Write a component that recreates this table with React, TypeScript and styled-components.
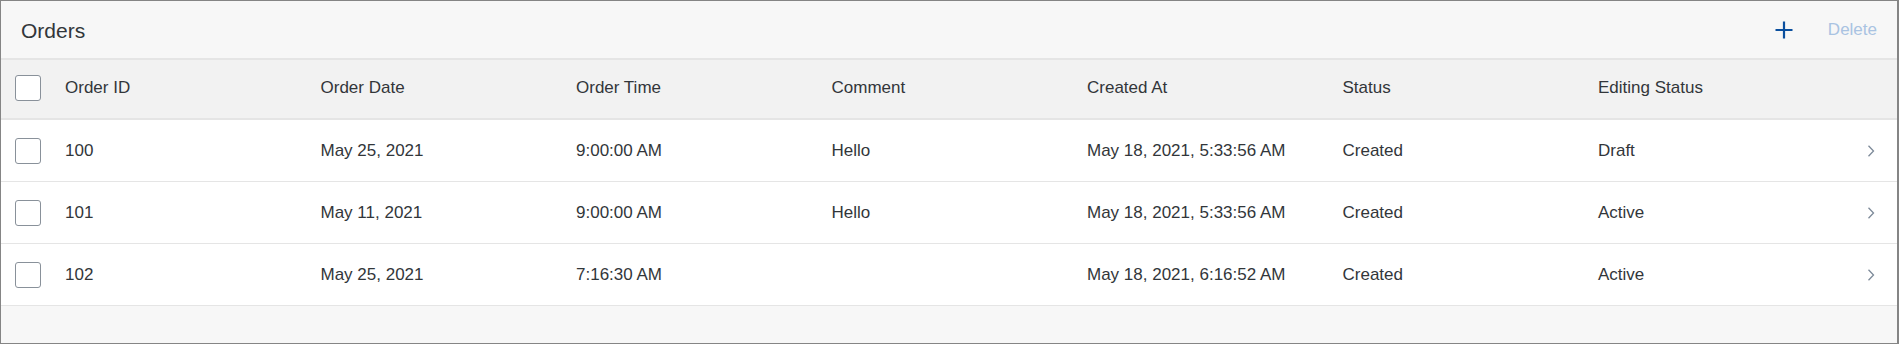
import React from "react";
import styled, { createGlobalStyle } from "styled-components";

const GlobalStyle = createGlobalStyle`
  html, body { margin: 0; padding: 0; background: #ffffff; }
  * { box-sizing: border-box; }
`

const Panel = styled.div`
  width: 1899px;
  height: 344px;
  border: 1px solid #858585;
  border-right-width: 2px;
  background: #f7f7f7;
  font-family: "Liberation Sans", Arial, sans-serif;
  color: #32363a;
  display: flex;
  flex-direction: column;
`

const TitleBar = styled.div`
  height: 59px;
  flex: none;
  display: flex;
  align-items: center;
  justify-content: space-between;
  padding: 3px 20px 0 20px;
  background: #f7f7f7;
  border-bottom: 2px solid #e5e5e5;
`

const Title = styled.h2`
  margin: 0;
  font-size: 21px;
  font-weight: normal;
  color: #32363a;
`

const Actions = styled.div`
  display: flex;
  align-items: center;
  gap: 35px;
  margin-top: -3px;
`

const IconButton = styled.button`
  border: none;
  background: none;
  padding: 0;
  width: 18px;
  height: 18px;
  display: flex;
  align-items: center;
  justify-content: center;
  cursor: pointer;
`

const TextButton = styled.button<{ $disabled?: boolean }>`
  border: none;
  background: none;
  padding: 0;
  font-family: inherit;
  font-size: 17px;
  color: ${p => (p.$disabled ? "#a9c3e2" : "#0854a0")};
  cursor: ${p => (p.$disabled ? "default" : "pointer")};
`

const Row = styled.div<{ $header?: boolean }>`
  display: grid;
  grid-template-columns: 57px repeat(7, 255.5px) 1fr;
  align-items: center;
  flex: none;
  height: ${p => (p.$header ? "60px" : "62px")};
  padding-bottom: ${p => (p.$header ? "2px" : "0")};
  background: ${p => (p.$header ? "#f2f2f2" : "#ffffff")};
  border-bottom: ${p => (p.$header ? "2px" : "1px")} solid #e5e5e5;
  font-size: 17px;
`

const Cell = styled.div`
  padding-left: 7px;
  white-space: nowrap;
  overflow: hidden;
`

const SelectCell = styled.div`
  padding-left: 14px;
  display: flex;
  align-items: center;
`

const Checkbox = styled.span`
  width: 26px;
  height: 26px;
  border: 1px solid #89919a;
  border-radius: 3px;
  background: #ffffff;
  display: block;
`

const NavCell = styled.div`
  display: flex;
  align-items: center;
  justify-content: center;
  padding-right: 2px;
`

const Footer = styled.div`
  flex: 1;
  background: #f7f7f7;
`

const columns = ["Order ID", "Order Date", "Order Time", "Comment", "Created At", "Status", "Editing Status"]

const orders = [
  { id: "100", date: "May 25, 2021", time: "9:00:00 AM", comment: "Hello", created: "May 18, 2021, 5:33:56 AM", status: "Created", editing: "Draft" },
  { id: "101", date: "May 11, 2021", time: "9:00:00 AM", comment: "Hello", created: "May 18, 2021, 5:33:56 AM", status: "Created", editing: "Active" },
  { id: "102", date: "May 25, 2021", time: "7:16:30 AM", comment: "", created: "May 18, 2021, 6:16:52 AM", status: "Created", editing: "Active" },
]

const PlusIcon = () => (
  <svg width="18" height="18" viewBox="0 0 18 18">
    <path d="M9 0.5V17.5M0.5 9H17.5" stroke="#0a4f9e" strokeWidth="2.2" fill="none"/>
  </svg>
)

const Chevron = () => (
  <svg width="8" height="12" viewBox="0 0 8 12">
    <path d="M1.5 0.8L6.5 6L1.5 11.2" stroke="#7d8a99" strokeWidth="1.3" fill="none"/>
  </svg>
)

export default function App() {
  return (
    <>
      <GlobalStyle/>
      <Panel>
        <TitleBar>
          <Title>Orders</Title>
          <Actions>
            <IconButton aria-label="Create"><PlusIcon/></IconButton>
            <TextButton $disabled>Delete</TextButton>
          </Actions>
        </TitleBar>
        <Row $header>
          <SelectCell><Checkbox/></SelectCell>
          {columns.map(c => <Cell key={c}>{c}</Cell>)}
          <NavCell/>
        </Row>
        {orders.map(o => (
          <Row key={o.id}>
            <SelectCell><Checkbox/></SelectCell>
            <Cell>{o.id}</Cell>
            <Cell>{o.date}</Cell>
            <Cell>{o.time}</Cell>
            <Cell>{o.comment}</Cell>
            <Cell>{o.created}</Cell>
            <Cell>{o.status}</Cell>
            <Cell>{o.editing}</Cell>
            <NavCell><Chevron/></NavCell>
          </Row>
        ))}
        <Footer/>
      </Panel>
    </>
  )
}
